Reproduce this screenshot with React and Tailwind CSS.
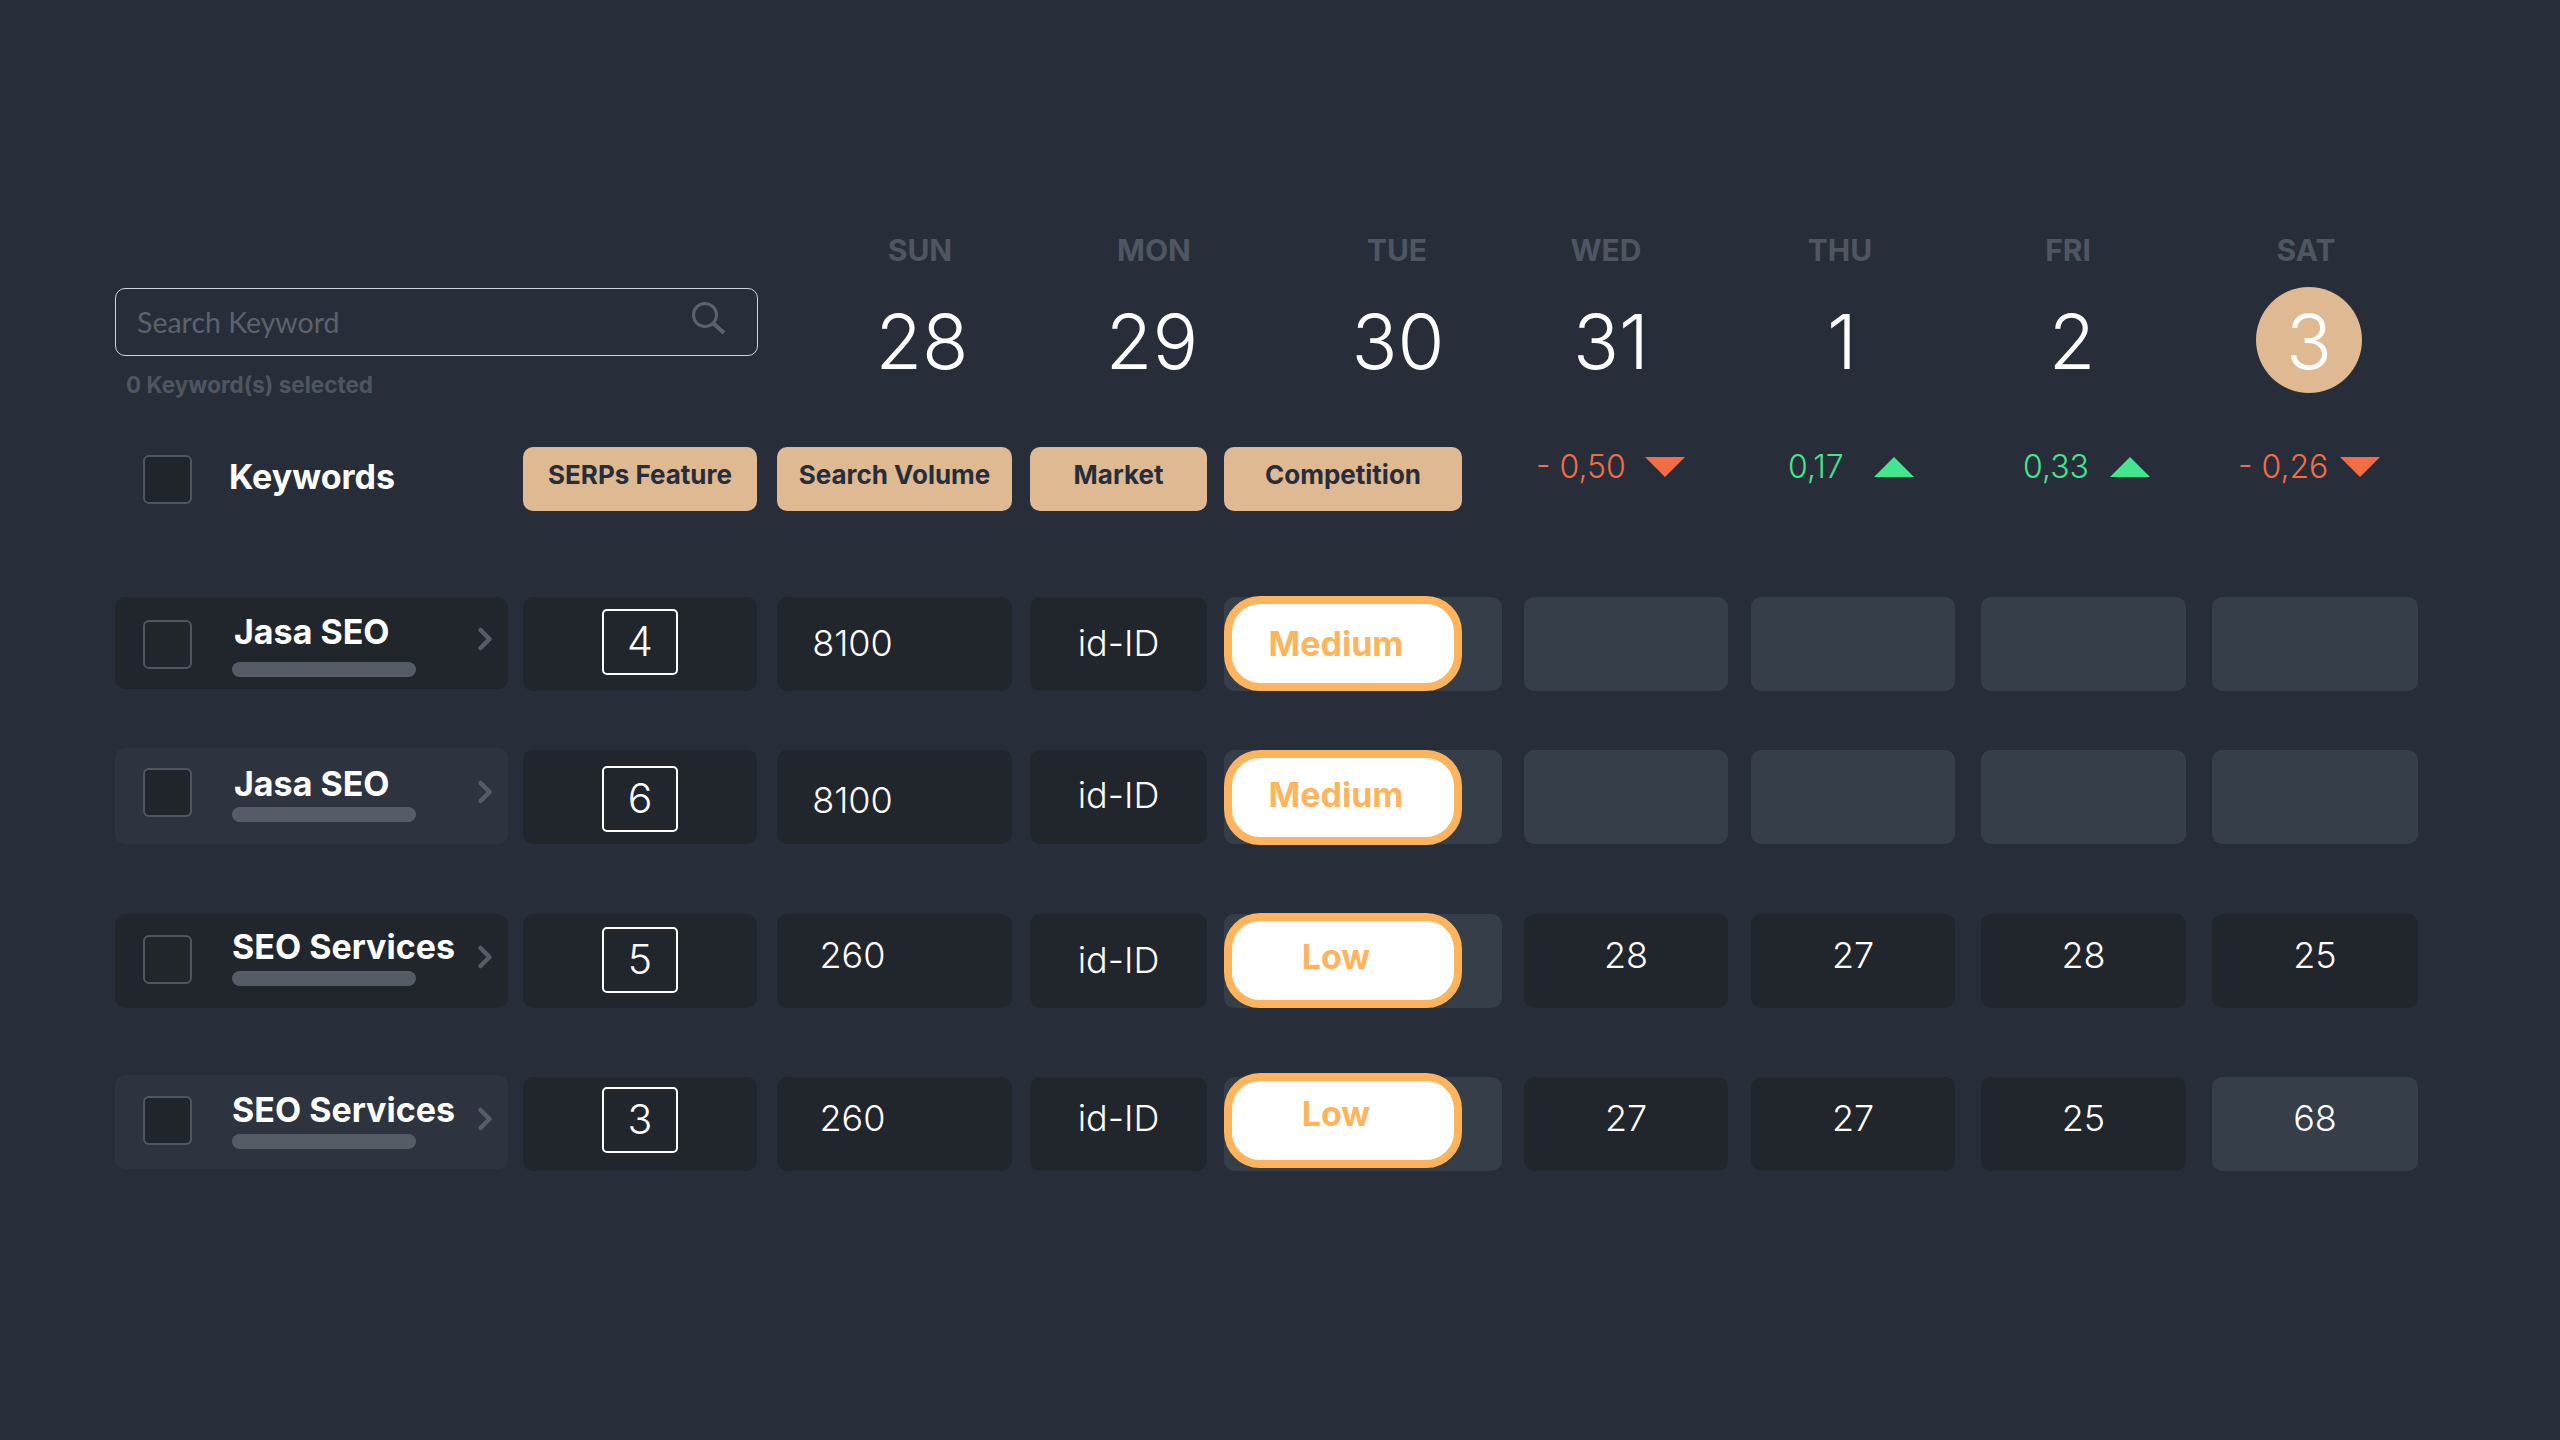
import React from 'react';
import { ChevronRight } from 'lucide-react';

const DAYS = [
    { label: 'SUN', num: '28', cls: 'w-[240px]', labelCls: 'pl-[0px]', numCls: 'pl-[4px]' },
    { label: 'MON', num: '29', cls: 'w-[224px]', labelCls: 'pl-[4px]', numCls: '' },
    { label: 'TUE', num: '30', cls: 'w-[266px]', labelCls: '', numCls: 'pl-[2px]' },
    { label: 'WED', num: '31', cls: 'w-[156px]', labelCls: 'pr-[4px]', numCls: 'pl-[6px]' },
    { label: 'THU', num: '1', cls: 'w-[310px]', labelCls: 'pr-[2px]', numCls: 'pl-[2px]' },
    { label: 'FRI', num: '2', cls: 'w-[148px]', labelCls: 'pr-[4px]', numCls: 'pl-[4px]' },
    { label: 'SAT', num: '3', cls: 'w-[326px]', labelCls: 'pr-[2px]', today: true },
];

const COL = {
    name: 'w-[393px]',
    serp: 'ml-[15px] w-[234px]',
    vol: 'ml-[20px] w-[235px]',
    market: 'ml-[18px] w-[177px]',
    comp: 'ml-[17px] w-[278px]',
    d1: 'ml-[22px] w-[204px]',
    d2: 'ml-[23px] w-[204px]',
    d3: 'ml-[26px] w-[205px]',
    d4: 'ml-[26px] w-[206px]',
};

const ROWS = [
    {
        top: 'mt-[86px]', name: 'Jasa SEO', nameCls: 'bg-[#21262d] h-[92px]', filled: false,
        chk: 'mt-[23px]', txt: 'pt-[15px]', label: 'pl-[2px]', bar: 'mt-[10px]', chev: 'mt-[24px]',
        rank: '4', rankCls: 'pb-[5px]', vol: '8100', volCls: 'pr-[84px] pb-[2px]', marketCls: 'pb-[2px]',
        level: 'Medium', pill: '-mt-[1px]', levelCls: '', cells: [null, null, null, null], cellCls: '',
    },
    {
        top: 'mt-[59px]', name: 'Jasa SEO', nameCls: 'bg-[#2d343f] h-[96px] -mt-[2px]', filled: true,
        chk: 'mt-[20px]', txt: 'pt-[16px]', label: 'pl-[2px]', bar: 'mt-[3px]', chev: 'mt-[26px]',
        rank: '6', rankCls: 'pt-[4px]', vol: '8100', volCls: 'pr-[84px] pt-[6px]', marketCls: 'pb-[4px]',
        level: 'Medium', pill: '', levelCls: 'pb-[6px]', cells: [null, null, null, null], cellCls: '',
    },
    {
        top: 'mt-[70px]', name: 'SEO Services', nameCls: 'bg-[#21262d] h-[94px]', filled: false,
        chk: 'mt-[21px]', txt: 'pt-[13px]', label: '', bar: 'mt-[4px]', chev: 'mt-[25px]',
        rank: '5', rankCls: 'pb-[2px]', vol: '260', volCls: 'pr-[84px] pb-[12px]', marketCls: 'pb-[2px]',
        level: 'Low', pill: '-mt-[1px]', levelCls: 'pb-[8px]', cells: ['28', '27', '28', '25'], cellCls: 'pb-[12px]',
    },
    {
        top: 'mt-[69px]', name: 'SEO Services', nameCls: 'bg-[#2d343f] h-[94px] -mt-[2px]', filled: true,
        chk: 'mt-[21px]', txt: 'pt-[15px]', label: '', bar: 'mt-[4px]', chev: 'mt-[26px]',
        rank: '3', rankCls: 'pb-[8px]', vol: '260', volCls: 'pr-[84px] pb-[12px]', marketCls: 'pb-[12px]',
        level: 'Low', pill: '-mt-[4px]', levelCls: 'pb-[14px]', cells: ['27', '27', '25', '68'], cellCls: 'pb-[12px]', lastLight: true,
    },
];

const CHANGES = [
    { col: COL.d1, pad: 'pl-[12px]', gap: 'ml-[19px]', text: '- 0,50', up: false },
    { col: COL.d2, pad: 'pl-[37px]', gap: 'ml-[30px]', text: '0,17', up: true },
    { col: COL.d3, pad: 'pl-[42px]', gap: 'ml-[21px]', text: '0,33', up: true },
    { col: COL.d4, pad: 'pl-[26px]', gap: 'ml-[12px]', text: '- 0,26', up: false },
];

const HEADS = [
    { label: 'SERPs Feature', col: COL.serp },
    { label: 'Search Volume', col: COL.vol },
    { label: 'Market', col: COL.market },
    { label: 'Competition', col: 'ml-[17px] w-[238px]' },
];

const Triangle = ({ up }) => (
    <svg width="40" height="20" viewBox="0 0 40 20" className={up ? 'fill-[#43e58f]' : 'fill-[#f26c46]'}>
        <polygon points={up ? '20,0 40,20 0,20' : '0,0 40,0 20,20'} />
    </svg>
);

const SearchIcon = () => (
    <svg width="36" height="33" viewBox="0 0 36 33" fill="none" stroke="#5c626d" strokeWidth="3" className="-mt-[8px]">
        <circle cx="14" cy="13" r="11.5" />
        <line x1="22" y1="21" x2="33" y2="31" strokeWidth="4" />
    </svg>
);

const Checkbox = ({ filled, className = '' }) => (
    <div className={`w-[49px] h-[49px] rounded-[6px] border-2 border-[#4f5661] shrink-0 ${filled ? 'bg-[#20252c]' : ''} ${className}`} />
);

const Row = ({ row }) => (
    <div className={`flex h-[94px] items-start ${row.top}`}>
        <div className={`${COL.name} ${row.nameCls} rounded-[10px] flex items-start pl-[28px] pr-[5px]`}>
            <Checkbox filled={row.filled} className={row.chk} />
            <div className={`ml-[40px] flex-1 flex flex-col ${row.txt}`}>
                <span className={`text-[34px] leading-[40px] font-bold text-white whitespace-nowrap ${row.label}`}>{row.name}</span>
                <div className={`h-[15px] w-[184px] rounded-full bg-[#565c66] ${row.bar}`} />
            </div>
            <ChevronRight size={36} strokeWidth={3} className={`text-[#565c66] shrink-0 ${row.chev}`} />
        </div>
        <div className={`${COL.serp} h-full rounded-[10px] bg-[#21262d] flex items-center justify-center ${row.rankCls}`}>
            <div className="w-[76px] h-[66px] rounded-[5px] border-2 border-white flex items-center justify-center text-[41px] font-light text-white">
                {row.rank}
            </div>
        </div>
        <div className={`${COL.vol} h-full rounded-[10px] bg-[#21262d] flex items-center justify-center text-[36px] font-light text-white ${row.volCls}`}>
            {row.vol}
        </div>
        <div className={`${COL.market} h-full rounded-[10px] bg-[#21262d] flex items-center justify-center text-[36px] font-light text-white ${row.marketCls}`}>
            id-ID
        </div>
        <div className={`${COL.comp} h-full rounded-[10px] bg-[#363e49] flex items-start`}>
            <div className={`w-[238px] h-[95px] shrink-0 rounded-[36px] border-[8px] border-[#fdb45c] bg-white flex items-center justify-center pr-[14px] text-[34px] font-bold text-[#fdb45c] ${row.pill} ${row.levelCls}`}>
                {row.level}
            </div>
        </div>
        {[COL.d1, COL.d2, COL.d3, COL.d4].map((col, i) => {
            const value = row.cells[i];
            const light = value === null || (row.lastLight && i === 3);
            return (
                <div
                    key={col}
                    className={`${col} h-full rounded-[10px] flex items-center justify-center text-[36px] font-light text-white ${light ? 'bg-[#363e49]' : 'bg-[#21262d]'} ${row.cellCls}`}
                >
                    {value}
                </div>
            );
        })}
    </div>
);

export default function App() {
    return (
        <div className="h-[1440px] w-full overflow-hidden bg-[#282e39] pl-[115px] pt-[232px] font-['Inter',sans-serif]">
            {/* Search + calendar header */}
            <div className="flex h-[170px]">
                <div className="w-[643px] pt-[56px] shrink-0">
                    <div className="h-[68px] rounded-[10px] border border-[#cfd3da] flex items-center justify-between pl-[21px] pr-[30px]">
                        <span className="font-['Lato',sans-serif] text-[28.5px] text-[#5c626d]">Search Keyword</span>
                        <SearchIcon />
                    </div>
                    <div className="mt-[16px] pl-[11px] text-[22.5px] leading-[26px] font-bold text-[#4f5661]">0 Keyword(s) selected</div>
                </div>
                <div className="ml-[42px] flex shrink-0">
                    {DAYS.map((d) => (
                        <div key={d.label} className={`${d.cls} flex flex-col items-center`}>
                            <div className={`text-[30px] leading-[36px] font-bold text-[#4f5661] ${d.labelCls}`}>{d.label}</div>
                            {d.today ? (
                                <div className="mt-[19px] ml-[4px] w-[106px] h-[106px] rounded-full bg-[#deb992] flex items-center justify-center pt-[2px] text-[76px] font-light text-white">
                                    {d.num}
                                </div>
                            ) : (
                                <div className={`mt-[19px] h-[106px] pt-[2px] flex items-center text-[76px] font-light text-white ${d.numCls}`}>{d.num}</div>
                            )}
                        </div>
                    ))}
                </div>
            </div>

            {/* Column heads */}
            <div className="flex h-[64px] mt-[45px] items-start">
                <div className={`${COL.name} h-full flex items-center pl-[28px]`}>
                    <Checkbox filled />
                    <span className="ml-[37px] pb-[6px] text-[34px] font-bold text-white">Keywords</span>
                </div>
                {HEADS.map((h) => (
                    <div key={h.label} className={`${h.col} h-full rounded-[10px] bg-[#deb992] flex items-center justify-center pb-[9px] text-[26px] font-bold text-[#282e39] whitespace-nowrap`}>
                        {h.label}
                    </div>
                ))}
                <div className="w-[40px] shrink-0" />
                {CHANGES.map((c, i) => (
                    <div key={c.text} className={`${c.col} ${i === 0 ? '-ml-[18px]' : ''} flex items-center h-[40px] ${c.pad} text-[32px] font-light ${c.up ? 'text-[#43e58f]' : 'text-[#f26c46]'}`}>
                        <span>{c.text}</span>
                        <span className={c.gap}><Triangle up={c.up} /></span>
                    </div>
                ))}
            </div>

            {ROWS.map((row, i) => (
                <Row key={i} row={row} />
            ))}
        </div>
    );
}
